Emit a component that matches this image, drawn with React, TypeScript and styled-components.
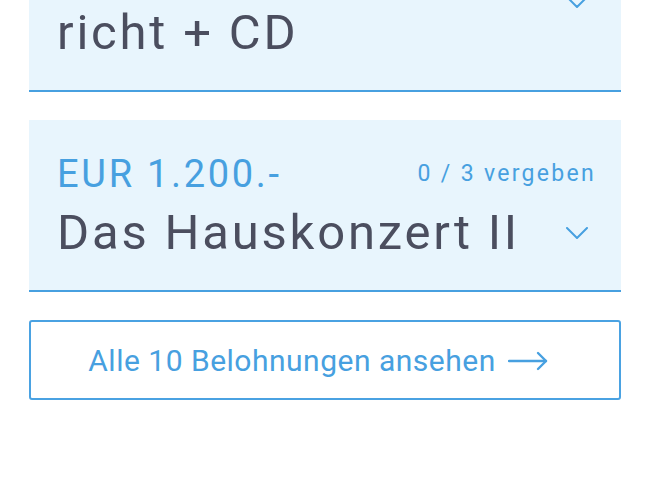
import React from "react";
import styled, { createGlobalStyle } from "styled-components";

interface Reward {
  id: string;
  price: string;
  given: number;
  total: number;
  title: string[];
}

const rewards: Reward[] = [
  {
    id: "unterricht",
    price: "EUR 600.-",
    given: 1,
    total: 5,
    title: ["Gesangsunter-", "richt + CD"],
  },
  {
    id: "hauskonzert",
    price: "EUR 1.200.-",
    given: 0,
    total: 3,
    title: ["Das Hauskonzert II"],
  },
];

// the list is shown scrolled, the first card is cut at the top edge
const scrollOffset = 142;

const GlobalStyle = createGlobalStyle`
  html, body {
    margin: 0;
    padding: 0;
    background: #ffffff;
  }

  body {
    font-family: Roboto, "Liberation Sans", Arial, sans-serif;
    -webkit-font-smoothing: antialiased;
  }
`;

function Chevron() {
  return (
    <ChevronIcon width="22" height="12" viewBox="0 0 22 12" fill="none">
      <polyline
        points="1,1 11,11 21,1"
        stroke="currentColor"
        strokeWidth="2"
        strokeLinecap="round"
        strokeLinejoin="round"
      />
    </ChevronIcon>
  );
}

function Arrow() {
  return (
    <ArrowIcon width="40" height="20" viewBox="0 0 40 20" fill="none">
      <line
        x1="1"
        y1="10"
        x2="38"
        y2="10"
        stroke="currentColor"
        strokeWidth="2.4"
        strokeLinecap="round"
      />
      <polyline
        points="30,2 38,10 30,18"
        stroke="currentColor"
        strokeWidth="2.4"
        strokeLinecap="round"
        strokeLinejoin="round"
      />
    </ArrowIcon>
  );
}

function RewardCard({ reward }: { reward: Reward }) {
  return (
    <Card>
      <CardHeader>
        <Price>{reward.price}</Price>
        <Given>
          {reward.given} / {reward.total} vergeben
        </Given>
      </CardHeader>
      <TitleRow>
        <Title>
          {reward.title.map((line, index) => (
            <span key={index}>
              {line}
              {index < reward.title.length - 1 && <br />}
            </span>
          ))}
        </Title>
        <Chevron />
      </TitleRow>
    </Card>
  );
}

export default function App() {
  return (
    <>
      <GlobalStyle />
      <Viewport>
        <RewardList>
          {rewards.map((reward) => (
            <RewardCard key={reward.id} reward={reward} />
          ))}
          <ShowAllButton type="button">
            <span>Alle 10 Belohnungen ansehen</span>
            <Arrow />
          </ShowAllButton>
        </RewardList>
      </Viewport>
    </>
  );
}

const Viewport = styled.div`
  height: 100vh;
  overflow: hidden;
  padding: 0 47px 0 29px;
`;

const RewardList = styled.div`
  display: flex;
  flex-direction: column;
  gap: 28px;
  margin-top: -${scrollOffset}px;
`;

const Card = styled.div`
  background: #e8f5fd;
  border-bottom: 2px solid #47a0e0;
  padding: 31px 25px 26px 28px;
  display: flex;
  flex-direction: column;
  gap: 5px;
`;

const CardHeader = styled.div`
  display: flex;
  align-items: center;
  justify-content: space-between;
`;

const Price = styled.div`
  color: #47a0e0;
  font-size: 38px;
  line-height: 46px;
  letter-spacing: 2.7px;
`;

const Given = styled.div`
  color: #47a0e0;
  font-size: 23px;
  line-height: 28px;
  letter-spacing: 2.3px;
`;

const TitleRow = styled.div`
  display: flex;
  align-items: center;
  justify-content: space-between;
`;

const Title = styled.div`
  color: #4b4e5f;
  font-size: 49px;
  line-height: 62px;
  letter-spacing: 2.8px;
`;

const ChevronIcon = styled.svg`
  color: #47a0e0;
  margin-right: 8px;
  flex-shrink: 0;
`;

const ShowAllButton = styled.button`
  height: 80px;
  border: 2px solid #4aa2e2;
  border-radius: 3px;
  background: #ffffff;
  color: #47a0e0;
  font-family: inherit;
  font-size: 30px;
  letter-spacing: 0.5px;
  display: flex;
  align-items: center;
  justify-content: center;
  gap: 12px;
  padding: 0 14px 0 0;
  cursor: pointer;
`;

const ArrowIcon = styled.svg`
  color: #47a0e0;
  margin-top: 2px;
`;
